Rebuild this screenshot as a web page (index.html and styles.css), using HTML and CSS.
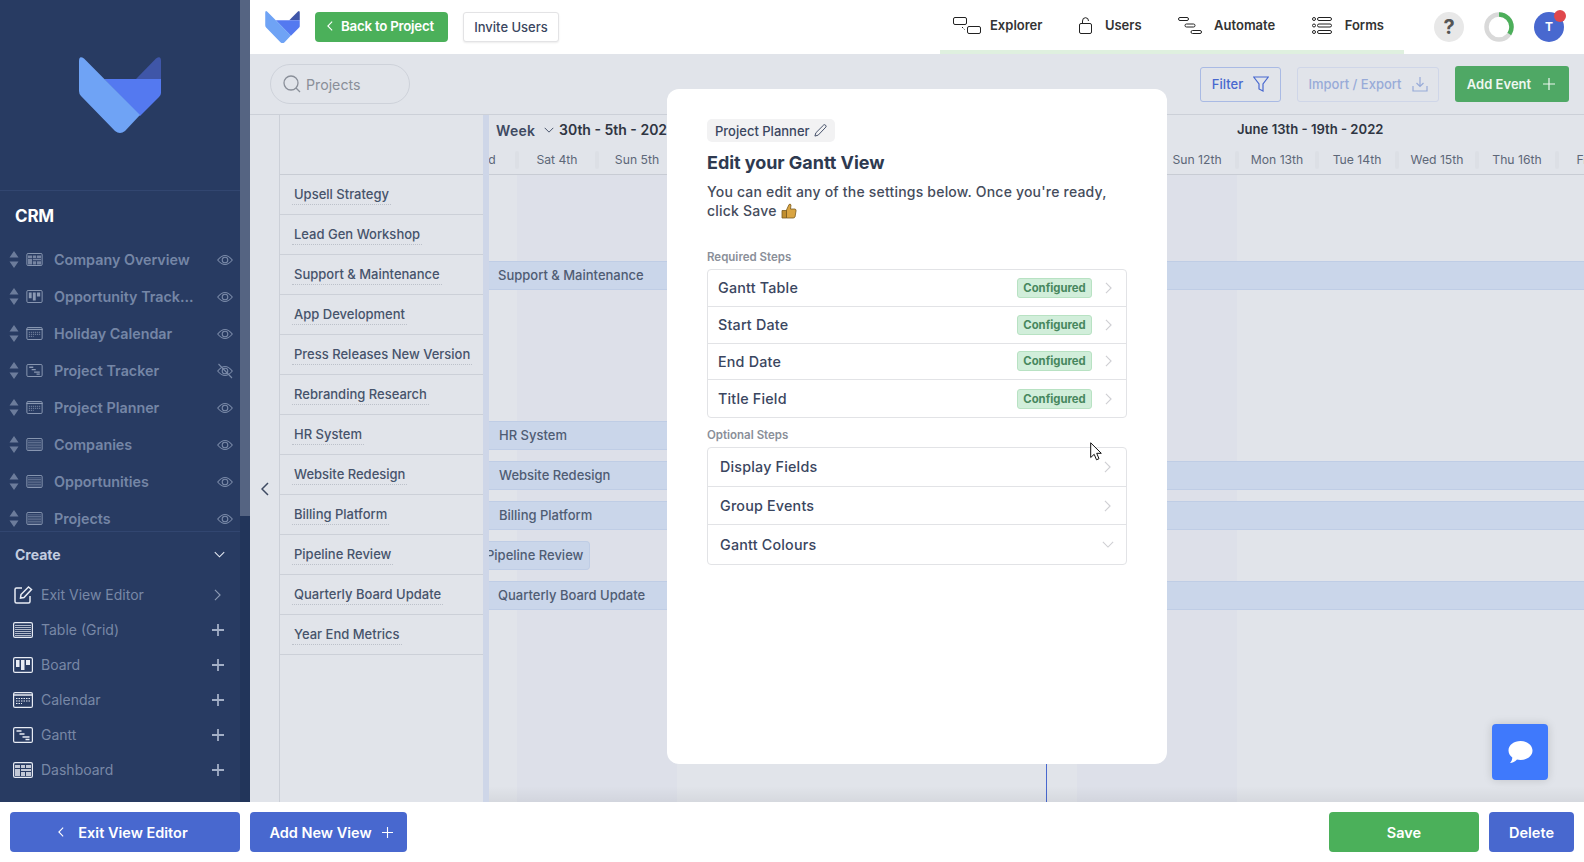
FILE: index.html
```html
<!DOCTYPE html>
<html lang="en">
<head>
    <meta charset="UTF-8">
    <title>Edit Gantt View</title>
    <link rel="stylesheet" href="styles.css">
</head>
<body>
<svg class="defs" width="0" height="0">
    <symbol id="logo" viewBox="0 0 82 76">
        <path fill="#3f56a8" d="M57 22 L77 1.500 Q82 -2 82 4 L82 22Z"/>
        <path fill="#5479f0" d="M25 22 L82 22 L82 36 Q82 38 80 40 L61 59Z"/>
        <path fill="#6fa3f5" d="M0 4 Q0 -2 5 1.500 L61 58 L46 74 Q41 78 36 74 L2 39 Q0 37 0 34Z"/>
    </symbol>
    <symbol id="sort" viewBox="0 0 10 17">
        <path fill="currentColor" d="M5 0 L9.500 6.500 L.5 6.500Z M.5 10.500 L9.500 10.500 L5 17Z"/>
    </symbol>
    <symbol id="eye" viewBox="0 0 16 12">
        <path fill="none" stroke="currentColor" stroke-width="1.100" d="M.7 6 Q8 -3 15.300 6 Q8 15 .7 6Z"/>
        <circle cx="8" cy="6" r="2.800" fill="none" stroke="currentColor" stroke-width="1.100"/>
    </symbol>
    <symbol id="eye-off" viewBox="0 0 16 16">
        <path fill="none" stroke="currentColor" stroke-width="1.100" d="M.7 8 Q8 -1 15.300 8 Q8 17 .7 8Z"/>
        <circle cx="8" cy="8" r="2.800" fill="none" stroke="currentColor" stroke-width="1.100"/>
        <path stroke="currentColor" stroke-width="1.100" d="M1.500 1 L15 15"/>
    </symbol>
    <symbol id="v-table" viewBox="0 0 20 16">
        <rect x=".6" y=".6" width="18.800" height="14.800" rx="1.500" fill="none" stroke="currentColor" stroke-width="1.200"/>
        <path stroke="currentColor" opacity=".7" d="M2 3.500H18M2 5.500H18M2 7.500H18M2 9.500H18M2 11.500H18M2 13.500H18"/>
    </symbol>
    <symbol id="v-board" viewBox="0 0 20 16">
        <rect x=".6" y=".6" width="18.800" height="14.800" rx="1.500" fill="none" stroke="currentColor" stroke-width="1.200"/>
        <path fill="currentColor" d="M3 3H6.500V10H3Z M8 3H11.500V13H8Z M13 3H17V8H13Z"/>
    </symbol>
    <symbol id="v-cal" viewBox="0 0 20 16">
        <rect x=".6" y=".6" width="18.800" height="14.800" rx="1.500" fill="none" stroke="currentColor" stroke-width="1.200"/>
        <path stroke="currentColor" d="M0 3H20" stroke-width="1.500"/>
        <path stroke="currentColor" stroke-dasharray="1.500 1" fill="none" d="M3 6.500H17M3 9H17M3 11.500H9"/>
    </symbol>
    <symbol id="v-gantt" viewBox="0 0 20 16">
        <rect x=".6" y=".6" width="18.800" height="14.800" rx="1.500" fill="none" stroke="currentColor" stroke-width="1.200"/>
        <path stroke="currentColor" stroke-width="1.600" d="M3.500 4H8.500M6.500 7H11.500M9.500 10H16.500M12.500 12.500H16.500"/>
    </symbol>
    <symbol id="v-dash" viewBox="0 0 20 16">
        <rect x=".6" y=".6" width="18.800" height="14.800" rx="1.500" fill="none" stroke="currentColor" stroke-width="1.200"/>
        <path fill="currentColor" d="M2 3H7V6H2Z M8 3H12V6H8Z M13 3H18V6H13Z M2 7H7V14H2Z M8 7H18V9H8Z M13 10H18V14H13Z M8 10H12V14H8Z" opacity=".8"/>
    </symbol>
    <symbol id="right" viewBox="0 0 8 14">
        <path fill="none" stroke="currentColor" stroke-width="1.300" d="M1 1 L7 7 L1 13"/>
    </symbol>
    <symbol id="down" viewBox="0 0 14 8">
        <path fill="none" stroke="currentColor" stroke-width="1.300" d="M1 1 L7 7 L13 1"/>
    </symbol>
    <symbol id="left" viewBox="0 0 8 14">
        <path fill="none" stroke="currentColor" stroke-width="1.500" d="M7 1 L1 7 L7 13"/>
    </symbol>
    <symbol id="plus" viewBox="0 0 12 12">
        <path stroke="currentColor" stroke-width="1.800" d="M6 0V12M0 6H12"/>
    </symbol>
    <symbol id="thin-plus" viewBox="0 0 12 12">
        <path stroke="currentColor" stroke-width="1.200" d="M6 0V12M0 6H12"/>
    </symbol>
</svg>

<div class="app">
    <div class="main">
        <aside class="sidebar">
            <div class="side-col">
                <div class="side-logo"><svg class="logo-big"><use href="#logo"/></svg></div>
                <div class="side-views">
                    <h2 class="crm">CRM</h2>
                    <div class="view-row"><svg class="sort"><use href="#sort"/></svg><svg class="v-icon"><use href="#v-dash"/></svg><span class="view-name">Company Overview</span><svg class="eye"><use href="#eye"/></svg></div>
                    <div class="view-row"><svg class="sort"><use href="#sort"/></svg><svg class="v-icon"><use href="#v-board"/></svg><span class="view-name">Opportunity Track...</span><svg class="eye"><use href="#eye"/></svg></div>
                    <div class="view-row"><svg class="sort"><use href="#sort"/></svg><svg class="v-icon"><use href="#v-cal"/></svg><span class="view-name">Holiday Calendar</span><svg class="eye"><use href="#eye"/></svg></div>
                    <div class="view-row"><svg class="sort"><use href="#sort"/></svg><svg class="v-icon"><use href="#v-gantt"/></svg><span class="view-name">Project Tracker</span><svg class="eye eye-off"><use href="#eye-off"/></svg></div>
                    <div class="view-row"><svg class="sort"><use href="#sort"/></svg><svg class="v-icon"><use href="#v-cal"/></svg><span class="view-name">Project Planner</span><svg class="eye"><use href="#eye"/></svg></div>
                    <div class="view-row"><svg class="sort"><use href="#sort"/></svg><svg class="v-icon"><use href="#v-table"/></svg><span class="view-name">Companies</span><svg class="eye"><use href="#eye"/></svg></div>
                    <div class="view-row"><svg class="sort"><use href="#sort"/></svg><svg class="v-icon"><use href="#v-table"/></svg><span class="view-name">Opportunities</span><svg class="eye"><use href="#eye"/></svg></div>
                    <div class="view-row"><svg class="sort"><use href="#sort"/></svg><svg class="v-icon"><use href="#v-table"/></svg><span class="view-name">Projects</span><svg class="eye"><use href="#eye"/></svg></div>
                </div>
                <div class="create-head"><span>Create</span><svg class="create-chev"><use href="#down"/></svg></div>
                <div class="create-row">
                    <svg class="c-icon edit-icon" viewBox="0 0 20 20"><path fill="none" stroke="currentColor" stroke-width="1.500" d="M9 3H3.500Q2 3 2 4.500V16.500Q2 18 3.500 18H15.500Q17 18 17 16.500V11"/><path fill="none" stroke="currentColor" stroke-width="1.500" d="M7.500 13 L8 9.500 L15.500 2 L18.500 4.500 L11 12.500Z"/></svg>
                    <span class="create-name">Exit View Editor</span><svg class="create-go"><use href="#right"/></svg>
                </div>
                <div class="create-row"><svg class="c-icon"><use href="#v-table"/></svg><span class="create-name">Table (Grid)</span><svg class="create-plus"><use href="#plus"/></svg></div>
                <div class="create-row"><svg class="c-icon"><use href="#v-board"/></svg><span class="create-name">Board</span><svg class="create-plus"><use href="#plus"/></svg></div>
                <div class="create-row"><svg class="c-icon"><use href="#v-cal"/></svg><span class="create-name">Calendar</span><svg class="create-plus"><use href="#plus"/></svg></div>
                <div class="create-row"><svg class="c-icon"><use href="#v-gantt"/></svg><span class="create-name">Gantt</span><svg class="create-plus"><use href="#plus"/></svg></div>
                <div class="create-row"><svg class="c-icon"><use href="#v-dash"/></svg><span class="create-name">Dashboard</span><svg class="create-plus"><use href="#plus"/></svg></div>
            </div>
            <div class="side-scroll"><div class="side-thumb"></div></div>
        </aside>

        <div class="content">
            <header class="topbar">
                <svg class="logo-small"><use href="#logo"/></svg>
                <button class="btn-back"><svg class="btn-chev"><use href="#left"/></svg>Back to Project</button>
                <button class="btn-invite">Invite Users</button>
                <nav class="topnav">
                    <a class="nav-item">
                        <svg class="nav-explorer" viewBox="0 0 28 17"><g fill="none" stroke="#222"><rect x=".5" y=".5" width="13" height="7" rx="1.500"/><rect x="14.500" y="9.500" width="13" height="7" rx="1.500"/><path d="M9 10 L11.500 12.500" stroke-dasharray="1.500 1"/></g></svg>
                        Explorer
                    </a>
                    <a class="nav-item">
                        <svg class="nav-lock" viewBox="0 0 13 17"><g fill="none" stroke="#222"><rect x=".5" y="6.500" width="12" height="10" rx="1.500"/><path d="M3.500 6.500V4Q3.500 .7 6.500 .7Q9.500 .7 9.500 4"/></g></svg>
                        Users
                    </a>
                    <a class="nav-item">
                        <svg class="nav-auto" viewBox="0 0 24 17"><g fill="none" stroke="#222"><rect x=".5" y=".5" width="10" height="3" rx="1.500"/><rect x="7" y="7" width="10" height="3" rx="1.500"/><rect x="13" y="13.500" width="10.500" height="3" rx="1.500"/></g></svg>
                        Automate
                    </a>
                    <a class="nav-item">
                        <svg class="nav-forms" viewBox="0 0 20 17"><g fill="none" stroke="#222"><rect x=".5" y=".5" width="3" height="3" rx="1.500"/><rect x="5.500" y=".5" width="14" height="3" rx="1.500"/><rect x=".5" y="7" width="3" height="3" rx="1.500"/><rect x="5.500" y="7" width="14" height="3" rx="1.500"/><rect x=".5" y="13.500" width="3" height="3" rx="1.500"/><rect x="5.500" y="13.500" width="14" height="3" rx="1.500"/></g></svg>
                        Forms
                    </a>
                </nav>
                <div class="top-right">
                    <span class="help">?</span>
                    <svg class="ring" viewBox="0 0 30 30"><circle cx="15" cy="15" r="12.500" fill="none" stroke="#d9d9d9" stroke-width="4.500"/><circle cx="15" cy="15" r="12.500" fill="none" stroke="#4caf5a" stroke-width="4.500" stroke-dasharray="27 60" transform="rotate(-90 15 15)"/></svg>
                    <span class="avatar">T<i class="avatar-dot"></i></span>
                </div>
            </header>

            <div class="toolbar">
                <div class="search">
                    <svg class="search-icon" viewBox="0 0 18 18"><circle cx="8" cy="8" r="7" fill="none" stroke="#8a8f99" stroke-width="1.300"/><path stroke="#8a8f99" stroke-width="1.300" d="M13 13 L17 17"/></svg>
                    Projects
                </div>
                <div class="tool-actions">
                    <button class="btn-filter">Filter
                        <svg class="filter-icon" viewBox="0 0 16 16"><path fill="none" stroke="#4868cf" stroke-width="1.200" d="M.7 1H15.300L10 8V15L6 13V8Z"/></svg>
                    </button>
                    <button class="btn-import">Import / Export
                        <svg class="import-icon" viewBox="0 0 16 16"><path fill="none" stroke="#98abd8" stroke-width="1.200" d="M8 1V10M4.500 7 L8 10.500 L11.500 7M1 10V15H15V10"/></svg>
                    </button>
                    <button class="btn-add">Add Event<svg class="add-plus"><use href="#thin-plus"/></svg></button>
                </div>
            </div>

            <div class="gantt">
                <div class="collapse"><svg class="collapse-chev"><use href="#left"/></svg></div>
                <div class="task-list">
                    <div class="task-head"></div>
                    <div class="task"><span>Upsell Strategy</span></div>
                    <div class="task"><span>Lead Gen Workshop</span></div>
                    <div class="task"><span>Support &amp; Maintenance</span></div>
                    <div class="task"><span>App Development</span></div>
                    <div class="task"><span>Press Releases New Version</span></div>
                    <div class="task"><span>Rebranding Research</span></div>
                    <div class="task"><span>HR System</span></div>
                    <div class="task"><span>Website Redesign</span></div>
                    <div class="task"><span>Billing Platform</span></div>
                    <div class="task"><span>Pipeline Review</span></div>
                    <div class="task"><span>Quarterly Board Update</span></div>
                    <div class="task"><span>Year End Metrics</span></div>
                </div>
                <div class="strip"></div>
                <div class="timeline">
                    <div class="time-head">
                        <div class="week-row">
                            <span class="week-pick">Week</span><svg class="week-chev"><use href="#down"/></svg>
                            <span class="week-label">30th - 5th - 2022</span>
                            <span class="week-label week-next">June 13th - 19th - 2022</span>
                        </div>
                        <div class="days">
                            <span class="day">Fri 3rd</span><span class="day">Sat 4th</span><span class="day">Sun 5th</span><span class="day"></span>
                            <span class="day"></span><span class="day"></span><span class="day"></span><span class="day"></span>
                            <span class="day"></span><span class="day">Sun 12th</span><span class="day">Mon 13th</span><span class="day">Tue 14th</span>
                            <span class="day">Wed 15th</span><span class="day">Thu 16th</span><span class="day">Fri 17th</span>
                        </div>
                    </div>
                    <div class="tracks">
                        <div class="track"></div>
                        <div class="track"></div>
                        <div class="track"><div class="bar">Support &amp; Maintenance</div></div>
                        <div class="track"></div>
                        <div class="track"></div>
                        <div class="track"></div>
                        <div class="track"><div class="bar bar-hr">HR System</div></div>
                        <div class="track"><div class="bar bar-in">Website Redesign</div></div>
                        <div class="track"><div class="bar bar-in">Billing Platform</div></div>
                        <div class="track"><div class="bar bar-pipeline">Pipeline Review</div></div>
                        <div class="track"><div class="bar">Quarterly Board Update</div></div>
                        <div class="today"></div>
                        <div class="fade"></div>
                    </div>
                </div>
            </div>
        </div>
    </div>

    <footer class="bottombar">
        <button class="btn-exit"><svg class="exit-chev"><use href="#left"/></svg>Exit View Editor</button>
        <button class="btn-new">Add New View<svg class="new-plus"><use href="#thin-plus"/></svg></button>
        <button class="btn-save">Save</button>
        <button class="btn-delete">Delete</button>
    </footer>

    <section class="modal">
        <div class="chip">Project Planner
            <svg class="chip-pen" viewBox="0 0 14 14"><path fill="none" stroke="#3a4660" stroke-width="1" d="M1 13 L2 9.500 L10.500 1 Q11.500 .3 12.500 1.300 Q13.500 2.500 12.800 3.300 L4.500 12Z"/></svg>
        </div>
        <h1 class="modal-title">Edit your Gantt View</h1>
        <p class="modal-text">You can edit any of the settings below. Once you're ready, click Save
            <svg class="thumb" viewBox="0 0 16 16"><path fill="#d9a441" stroke="#7a5a1e" stroke-width=".8" d="M5.500 7 L8 1.500 Q9.500 .5 10 2 L9.500 6 H14 Q15.500 6.500 15 8 L14 14 Q13.500 15 12 15 H5.500Z"/><path fill="#c08e2e" stroke="#7a5a1e" stroke-width=".8" d="M1 7.500H5.500V15H1Z"/></svg>
        </p>

        <div class="steps-label">Required Steps</div>
        <div class="steps">
            <div class="step"><span>Gantt Table</span><span class="badge">Configured</span><svg class="step-chev"><use href="#right"/></svg></div>
            <div class="step"><span>Start Date</span><span class="badge">Configured</span><svg class="step-chev"><use href="#right"/></svg></div>
            <div class="step"><span>End Date</span><span class="badge">Configured</span><svg class="step-chev"><use href="#right"/></svg></div>
            <div class="step"><span>Title Field</span><span class="badge">Configured</span><svg class="step-chev"><use href="#right"/></svg></div>
        </div>

        <div class="steps-label steps-label-opt">Optional Steps</div>
        <div class="steps steps-opt">
            <div class="step"><span>Display Fields</span><svg class="step-chev"><use href="#right"/></svg></div>
            <div class="step"><span>Group Events</span><svg class="step-chev"><use href="#right"/></svg></div>
            <div class="step"><span>Gantt Colours</span><svg class="step-down"><use href="#down"/></svg></div>
        </div>
    </section>

    <svg class="cursor" viewBox="0 0 12 19"><path fill="#fff" stroke="#111" d="M.7 .8 V15.500 L4.200 12.300 L6.500 17.800 L9 16.700 L6.700 11.300 H11.300Z"/></svg>

    <button class="chat">
        <svg class="chat-icon" viewBox="0 0 25 24"><path fill="#fff" d="M12.500 1C19 1 24.500 5 24.500 10.500C24.500 16 19 20 12.500 20C11 20 10 19.800 9 19.500C7 21.500 4.500 23 2 23C3.500 21.500 4.300 19.500 4.300 17.500C2 15.800 .5 13.300 .5 10.500C.5 5 6 1 12.500 1Z"/></svg>
    </button>
</div>
</body>
</html>
```

FILE: styles.css
```css
* {
    box-sizing: border-box;
}

body {
    margin: 0;
    font-family: Inter, "Noto Sans", sans-serif;
    color: #3a4660;
}

.defs {
    position: absolute;
}

button {
    font-family: inherit;
    border: none;
    cursor: pointer;
}

.app {
    position: relative;
    width: 1584px;
    height: 862px;
    display: flex;
    flex-direction: column;
    overflow: hidden;
    background: #fff;
}

.main {
    display: flex;
    height: 802px;
}

/* sidebar */
.sidebar {
    width: 250px;
    flex: none;
    display: flex;
    background: #283b62;
}

.side-col {
    width: 240px;
}

.side-scroll {
    width: 10px;
    background: #22355a;
}

.side-thumb {
    height: 516px;
    background: #556482;
}

.side-logo {
    height: 191px;
    padding: 57px 0 0 79px;
    border-bottom: 1px solid #324670;
}

.logo-big {
    width: 82px;
    height: 76px;
    display: block;
}

.side-views {
    height: 340px;
    overflow: hidden;
}

.crm {
    margin: 0;
    height: 50px;
    padding: 15px 0 0 15px;
    font-size: 17px;
    line-height: 20px;
    font-weight: 700;
    letter-spacing: -.2px;
    color: #fff;
}

.view-row {
    height: 37px;
    display: flex;
    align-items: center;
    color: #7586a6;
}

.sort {
    width: 10px;
    height: 17px;
    margin-left: 9px;
    color: #6c7c9b;
    flex: none;
}

.v-icon {
    width: 17px;
    height: 13px;
    margin-left: 7px;
    color: #8b99b3;
    flex: none;
}

.view-name {
    margin-left: 11px;
    width: 163px;
    font-size: 14.3px;
    font-weight: 600;
    white-space: nowrap;
}

.eye {
    width: 16px;
    height: 12px;
    color: #7a8aa8;
}

.eye-off {
    height: 16px;
}

.create-head {
    height: 46px;
    padding: 0 15px;
    border-top: 1px solid #324670;
    display: flex;
    align-items: center;
    justify-content: space-between;
    font-size: 14px;
    font-weight: 700;
    color: #c3cde0;
}

.create-chev {
    width: 11px;
    height: 7px;
    color: #e8ecf4;
}

.create-row {
    height: 35px;
    display: flex;
    align-items: center;
    padding-left: 13px;
}

.c-icon {
    width: 20px;
    height: 16px;
    color: #e8ecf4;
    flex: none;
}

.edit-icon {
    width: 20px;
    height: 20px;
}

.create-name {
    margin-left: 8px;
    width: 171px;
    font-size: 14px;
    color: #7888a6;
}

.create-go {
    width: 7px;
    height: 12px;
    margin-left: 2px;
    color: #8b99b3;
}

.create-plus {
    width: 12px;
    height: 12px;
    color: #a3afc6;
}

/* top */
.content {
    flex: 1;
    display: flex;
    flex-direction: column;
    min-width: 0;
    background: #e1e4ea;
}

.topbar {
    height: 54px;
    flex: none;
    display: flex;
    align-items: flex-start;
    background: #fff;
}

.logo-small {
    width: 35px;
    height: 32px;
    margin: 11px 0 0 15px;
}

.btn-back {
    width: 133px;
    height: 30px;
    margin: 12px 0 0 15px;
    padding: 0 2px 3px 0;
    display: flex;
    align-items: center;
    justify-content: center;
    gap: 8px;
    background: #4bb05a;
    color: #fff;
    border-radius: 4px;
    font-size: 13.3px;
    font-weight: 600;
    letter-spacing: -.25px;
}

.btn-chev {
    width: 6px;
    height: 10px;
}

.btn-invite {
    width: 96px;
    height: 30px;
    margin: 12px 0 0 15px;
    background: #fff;
    border: 1px solid #e3e3e5;
    border-radius: 3px;
    box-shadow: 0 1px 2px rgba(0, 0, 0, .08);
    font-size: 13px;
    font-weight: 500;
    color: #3a4660;
}

.topnav {
    width: 464px;
    height: 54px;
    margin-left: 381px;
    padding: 0 20px 0 13px;
    border-bottom: 4px solid #dff0df;
    display: flex;
    align-items: center;
    justify-content: space-between;
}

.nav-item {
    display: flex;
    align-items: center;
    font-size: 13px;
    font-weight: 600;
    color: #333;
}

.nav-explorer {
    width: 28px;
    height: 17px;
    margin-right: 9px;
}

.nav-lock {
    width: 13px;
    height: 17px;
    margin-right: 13px;
}

.nav-auto {
    width: 24px;
    height: 17px;
    margin-right: 12px;
}

.nav-forms {
    width: 20px;
    height: 17px;
    margin-right: 13px;
}

.top-right {
    display: flex;
    gap: 20px;
    margin: 12px 0 0 30px;
}

.help {
    width: 30px;
    height: 30px;
    border-radius: 50%;
    background: #e8e8e8;
    text-align: center;
    font-size: 20px;
    line-height: 30px;
    font-weight: 700;
    color: #555;
}

.ring {
    width: 30px;
    height: 30px;
}

.avatar {
    position: relative;
    width: 30px;
    height: 30px;
    border-radius: 50%;
    background: #4868cf;
    text-align: center;
    color: #fff;
    font-size: 12px;
    line-height: 30px;
    font-weight: 700;
}

.avatar-dot {
    position: absolute;
    top: -2px;
    right: -2px;
    width: 12px;
    height: 12px;
    border-radius: 50%;
    background: #e0474c;
}

/* toolbar */
.toolbar {
    height: 61px;
    flex: none;
    display: flex;
    align-items: center;
    padding: 0 15px 0 20px;
    border-bottom: 1px solid #ccd0d8;
}

.search {
    width: 140px;
    height: 40px;
    display: flex;
    align-items: center;
    gap: 5px;
    padding-left: 12px;
    border: 1px solid #ced2da;
    border-radius: 20px;
    font-size: 14.2px;
    color: #8a8f99;
}

.search-icon {
    width: 18px;
    height: 18px;
}

.tool-actions {
    margin-left: auto;
    display: flex;
    align-items: center;
    gap: 16px;
}

.btn-filter,
.btn-import {
    height: 35px;
    display: flex;
    align-items: center;
    justify-content: center;
    gap: 10px;
    background: transparent;
    border-radius: 3px;
    font-size: 13px;
    font-weight: 500;
}

.btn-filter {
    width: 81px;
    border: 1px solid #a9bae4;
    color: #4868cf;
}

.btn-import {
    width: 142px;
    border: 1px solid #cfd6e8;
    color: #98abd8;
}

.filter-icon,
.import-icon {
    width: 16px;
    height: 16px;
}

.btn-add {
    width: 114px;
    height: 36px;
    display: flex;
    align-items: center;
    justify-content: center;
    gap: 12px;
    padding-right: 8px;
    background: #4fa865;
    border-radius: 3px;
    color: #eef7f0;
    font-size: 13px;
    font-weight: 600;
}

.add-plus {
    width: 12px;
    height: 12px;
}

/* gantt */
.gantt {
    flex: 1;
    display: flex;
    min-height: 0;
}

.collapse {
    width: 29px;
    flex: none;
    padding: 367px 0 0 11px;
}

.collapse-chev {
    width: 8px;
    height: 14px;
    color: #3e4a62;
    display: block;
}

.task-list {
    width: 204px;
    flex: none;
    border-left: 1.5px solid #ccd0d8;
}

.task-head {
    height: 60px;
    border-bottom: 1.5px solid #c8ccd4;
}

.task {
    height: 40px;
    padding: 10px 0 0 12px;
    border-bottom: 1.5px solid #ccd0d8;
    font-size: 13px;
    font-weight: 500;
    line-height: 18px;
    color: #46536b;
}

.task span {
    display: inline-block;
    padding: 0 2px 1px;
    border-bottom: 1px dotted #bcc1ca;
}

.strip {
    width: 6px;
    flex: none;
    background: #ced6e8;
}

.timeline {
    flex: 1;
    min-width: 0;
    position: relative;
    overflow: hidden;
}

.time-head {
    height: 60px;
    border-bottom: 1.5px solid #c8ccd4;
}

.week-row {
    position: relative;
    height: 35px;
}

.week-pick {
    position: absolute;
    left: 7px;
    top: 7px;
    font-size: 14px;
    font-weight: 600;
    letter-spacing: .3px;
    color: #3e4a62;
}

.week-chev {
    position: absolute;
    left: 55px;
    top: 12px;
    width: 10px;
    height: 6px;
    color: #3e4a62;
}

.week-label {
    position: absolute;
    left: 70px;
    top: 6px;
    font-size: 14px;
    font-weight: 600;
    color: #2f3542;
    white-space: nowrap;
}

.week-next {
    left: 748px;
    font-size: 13.1px;
}

.days {
    display: flex;
    margin-left: -52px;
}

.day {
    position: relative;
    width: 80px;
    height: 20px;
    flex: none;
    text-align: center;
    font-size: 12.2px;
    line-height: 20px;
    color: #5d6778;
    white-space: nowrap;
}

.day::before {
    content: "";
    position: absolute;
    left: -2px;
    top: 1px;
    width: 4px;
    height: 18px;
    background: #dcdfe5;
    border-radius: 2px;
}

.tracks {
    position: relative;
    height: 627px;
    background: linear-gradient(90deg, #dde0e9 0 160px, transparent 160px) 28px 0 / 560px 100% repeat-x;
}

.track {
    height: 40px;
    padding-top: 6px;
}

.bar {
    height: 29px;
    padding-left: 9px;
    background: #cad6ea;
    border-top: 1px solid #bfcde5;
    border-bottom: 1px solid #bfcde5;
    font-size: 13px;
    font-weight: 500;
    line-height: 27px;
    color: #4f5c73;
    white-space: nowrap;
}

.bar-hr {
    width: 400px;
    padding-left: 10px;
}

.bar-in {
    padding-left: 10px;
}

.bar-pipeline {
    width: 101px;
    padding-left: 0;
    text-indent: -3px;
    border-right: 1px solid #bfcde5;
    border-radius: 0 4px 4px 0;
}

.today {
    position: absolute;
    left: 557px;
    top: 0;
    bottom: 0;
    width: 1px;
    background: #4868cf;
}

.fade {
    position: absolute;
    left: 0;
    right: 0;
    bottom: 0;
    height: 16px;
    background: linear-gradient(rgba(0, 0, 0, 0), rgba(0, 0, 0, .05));
}

/* bottom */
.bottombar {
    height: 60px;
    flex: none;
    display: flex;
    align-items: center;
    padding: 0 10px;
    background: #fff;
}

.bottombar button {
    height: 40px;
    color: #fff;
    font-size: 14.5px;
    font-weight: 600;
    border-radius: 4px;
    display: flex;
    align-items: center;
    justify-content: center;
}

.btn-exit {
    width: 230px;
    gap: 14px;
    padding-right: 10px;
    background: #4868cf;
}

.exit-chev {
    width: 6px;
    height: 10px;
}

.btn-new {
    width: 157px;
    margin-left: 10px;
    gap: 10px;
    padding-left: 11px;
    background: #4868cf;
}

.new-plus {
    width: 11px;
    height: 11px;
}

.btn-save {
    width: 150px;
    margin-left: auto;
    background: #4bb05a;
}

.btn-delete {
    width: 85px;
    margin-left: 10px;
    background: #4868cf;
}

/* modal */
.modal {
    position: absolute;
    left: 667px;
    top: 89px;
    width: 500px;
    height: 675px;
    padding: 30px 40px;
    background: #fff;
    border-radius: 12px;
}

.chip {
    display: inline-flex;
    align-items: center;
    gap: 4px;
    height: 23px;
    padding: 0 8px;
    background: #f2f2f3;
    border-radius: 5px;
    font-size: 13px;
    font-weight: 500;
    color: #3a4660;
}

.chip-pen {
    width: 13px;
    height: 13px;
}

.modal-title {
    margin: 9px 0 0;
    font-size: 18px;
    line-height: 24px;
    font-weight: 700;
    letter-spacing: -.05px;
    color: #2e3a50;
}

.modal-text {
    margin: 7px 0 0;
    font-size: 14px;
    line-height: 19px;
    font-weight: 500;
    letter-spacing: .2px;
    color: #454c5c;
}

.thumb {
    width: 16px;
    height: 16px;
    vertical-align: -3px;
}

.steps-label {
    margin-top: 30px;
    font-size: 11.5px;
    line-height: 14px;
    font-weight: 600;
    color: #8a8f99;
}

.steps-label-opt {
    margin-top: 10px;
}

.steps {
    margin-top: 5px;
    border: 1px solid #e2e3e6;
    border-radius: 4px;
}

.step {
    height: 36.75px;
    padding: 0 14px 0 10px;
    display: flex;
    align-items: center;
    border-bottom: 1px solid #e2e3e6;
    font-size: 14.3px;
    font-weight: 500;
    letter-spacing: .2px;
    color: #3a4660;
}

.step:last-child {
    border-bottom: none;
}

.step span:first-child {
    margin-right: auto;
}

.steps-opt .step {
    height: 38.7px;
    padding: 0 15px 0 12px;
}

.badge {
    width: 75px;
    height: 20px;
    margin-right: 13px;
    border: 1px solid #b8e2c3;
    border-radius: 3px;
    background: #d1eeda;
    text-align: center;
    font-size: 11.3px;
    line-height: 18px;
    font-weight: 700;
    letter-spacing: 0;
    color: #47875e;
}

.step-chev {
    width: 7px;
    height: 12px;
    color: #cfcfd3;
}

.step-down {
    width: 12px;
    height: 7px;
    margin-right: -3px;
    color: #cfcfd3;
}

.cursor {
    position: absolute;
    left: 1090px;
    top: 442px;
    width: 12px;
    height: 19px;
}

.chat {
    position: absolute;
    left: 1492px;
    top: 724px;
    width: 56px;
    height: 56px;
    display: flex;
    align-items: center;
    justify-content: center;
    background: #3f79fc;
    border-radius: 4px;
    box-shadow: 0 0 10px rgba(0, 0, 0, .15);
}

.chat-icon {
    width: 25px;
    height: 24px;
}
```
